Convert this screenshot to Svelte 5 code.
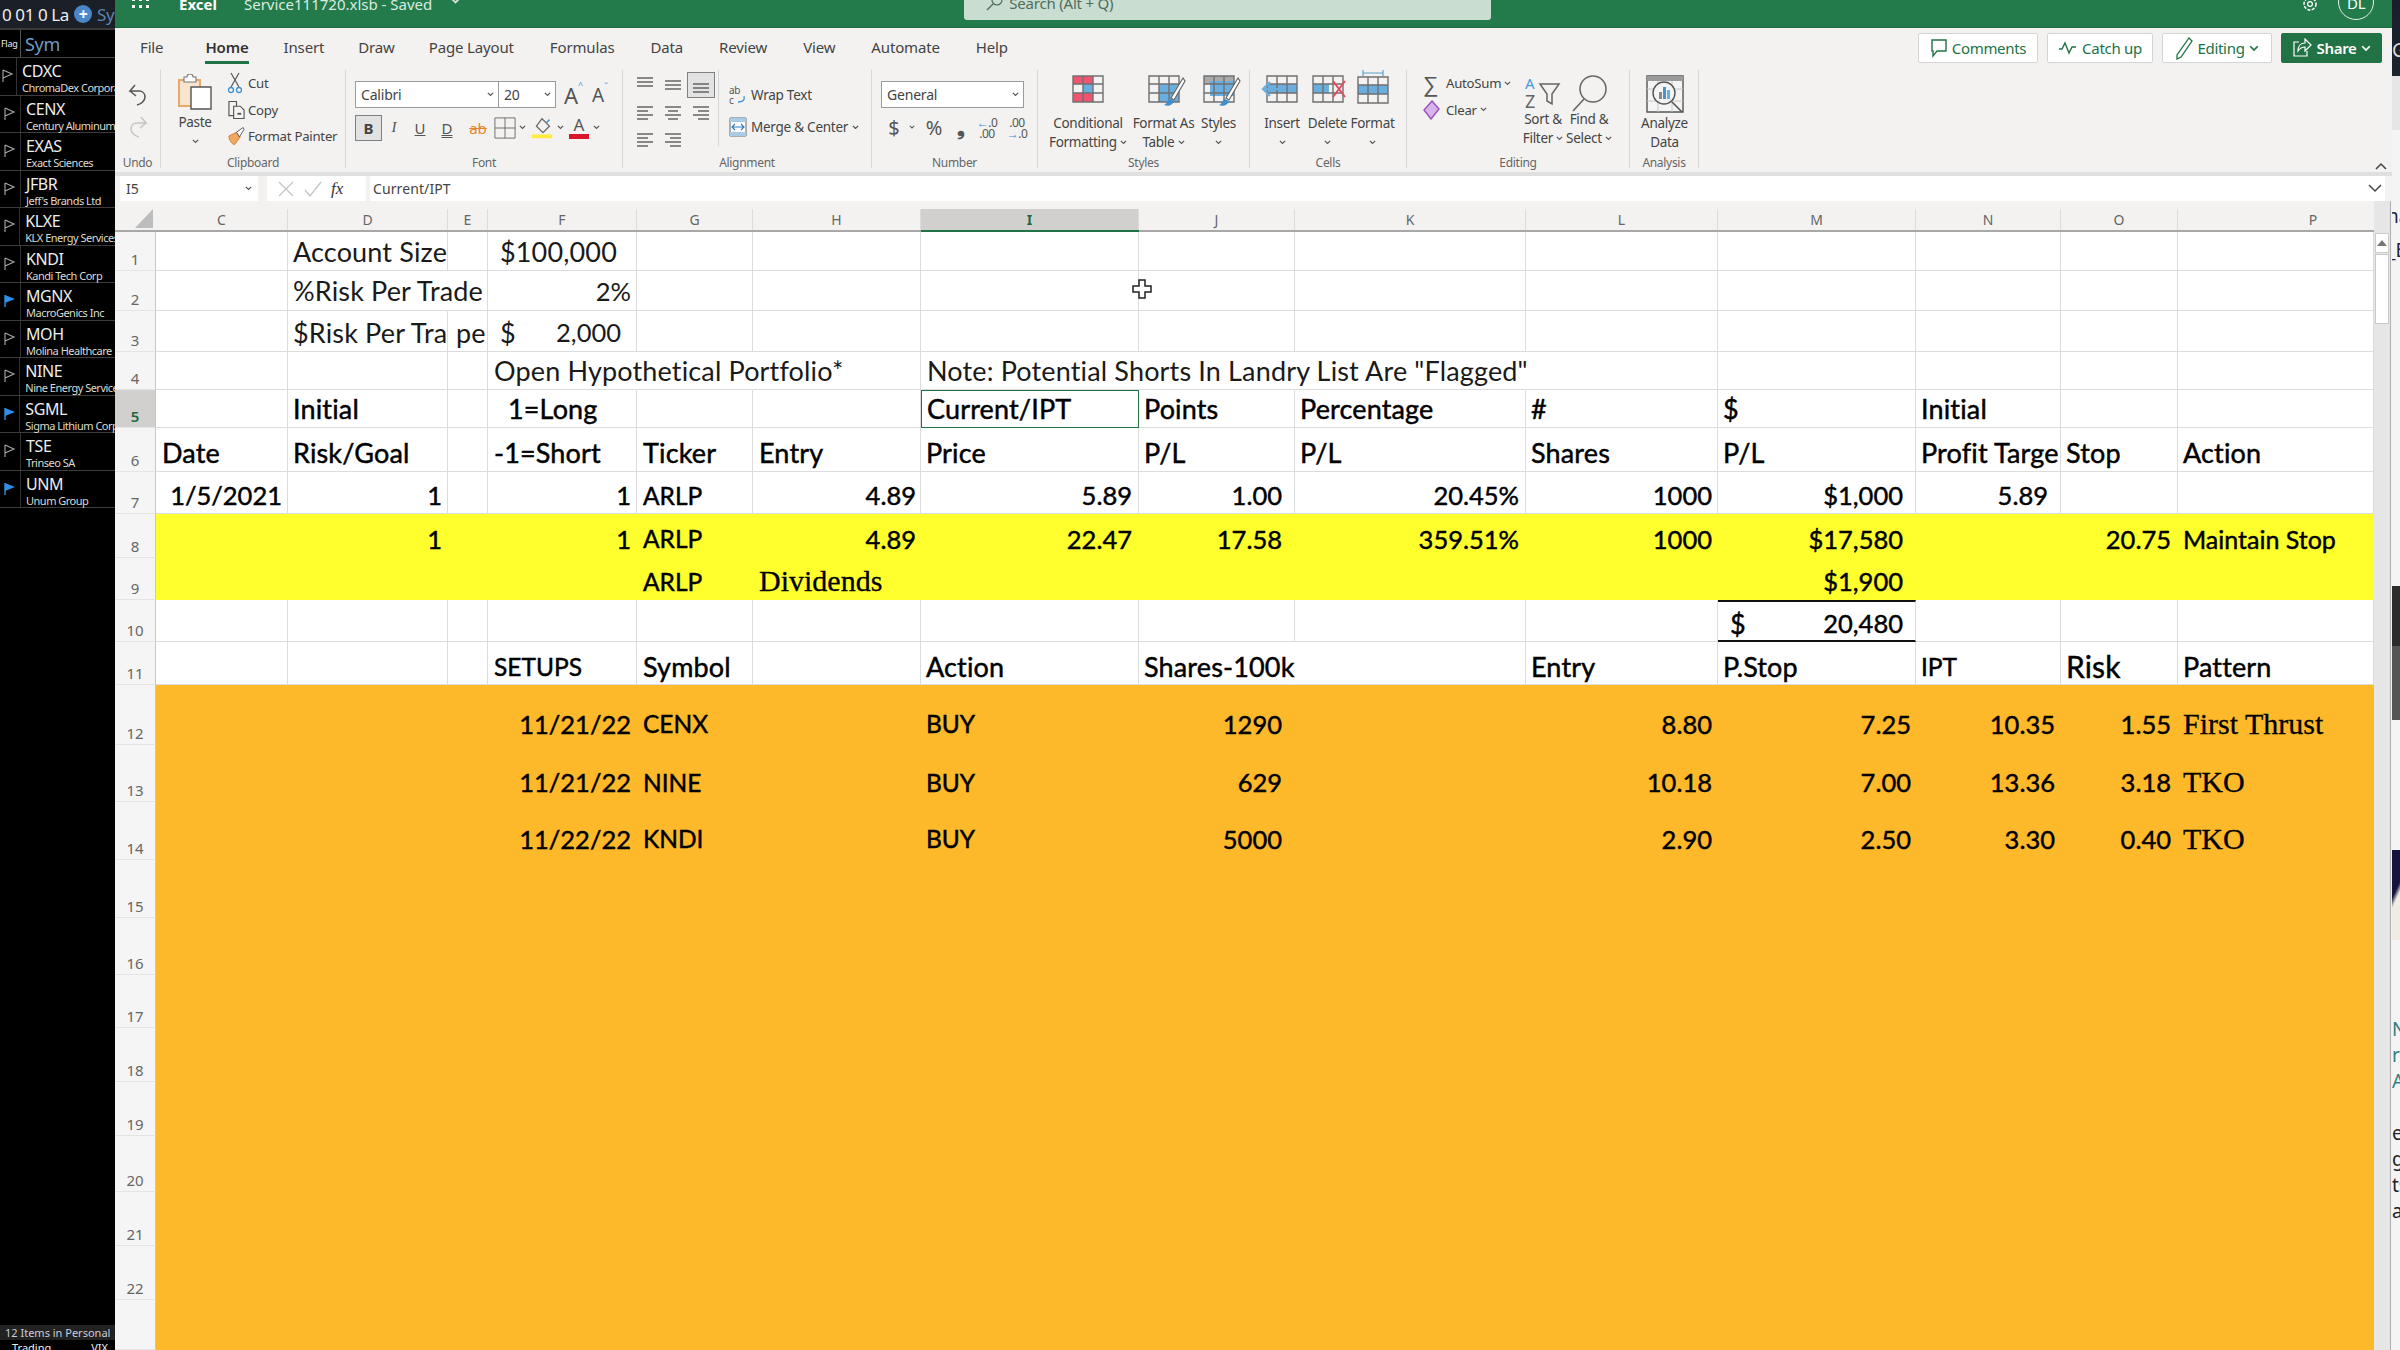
<script>
  const cols = ['C','D','E','F','G','H','I','J','K','L','M','N','O','P'];
  const heads = cols;

  const l = (t, pad = 6, extra = {}) => ({ t, pad, align: 'left', ...extra });
  const r = (t, pad = 5, extra = {}) => ({ t, pad, align: 'right', ...extra });

  const rows = [
    { n: 1, h: 39, lift: 0, tone: 'plain', cells: { D: l('Account Size', 5), F: l('$100,000', 12) } },
    { n: 2, h: 40, lift: 0, tone: 'plain', cells: { D: l('%Risk Per Trade', 5, { nb: 1 }), E: l(''), F: r('2%', 5) } },
    { n: 3, h: 41, lift: 2, tone: 'plain', cells: { D: l('$Risk Per Tra', 5, { clip: 1 }), E: l('pe', 8), F: l('$', 12, { t2: '2,000', pad2: 15 }) } },
    { n: 4, h: 38, lift: 0, tone: 'plain', cells: { F: l('Open Hypothetical Portfolio*', 6, { nb: 1 }), G: l('', 6, { nb: 1 }), I: l('Note: Potential Shorts In Landry List Are "Flagged"', 6, { nb: 1 }), J: l('', 6, { nb: 1 }), K: l('', 6, { nb: 1 }) } },
    { n: 5, h: 38, lift: 0, tone: 'bold', sel: 1, cells: { D: l('Initial', 5), F: l('1=Long', 20), I: l('Current/IPT', 6, { selected: 1 }), J: l('Points', 5), K: l('Percentage', 5), L: l('#', 5), M: l('$', 5), N: l('Initial', 5) } },
    { n: 6, h: 44, lift: 5, tone: 'bold', cells: { C: l('Date'), D: l('Risk/Goal', 5), F: l('-1=Short'), G: l('Ticker'), H: l('Entry'), I: l('Price', 5), J: l('P/L', 5), K: l('P/L', 5), L: l('Shares', 5), M: l('P/L', 5), N: l('Profit Targe', 5, { clip: 1 }), O: l('Stop', 5), P: l('Action', 5) } },
    { n: 7, h: 42, lift: 5, tone: 'bold', cells: { C: r('1/5/2021', 5), D: r('1', 5), F: r('1', 5), G: l('ARLP'), H: r('4.89', 4), I: r('5.89', 6), J: r('1.00', 12), K: r('20.45%', 6), L: r('1000', 5), M: r('$1,000', 12), N: r('5.89', 12) } },
    { n: 8, h: 44, lift: 6, tone: 'bold', fill: 'yellow', cells: { D: r('1', 5), F: r('1', 5), G: l('ARLP'), H: r('4.89', 4), I: r('22.47', 6), J: r('17.58', 12), K: r('359.51%', 6), L: r('1000', 5), M: r('$17,580', 12), O: r('20.75', 6), P: l('Maintain Stop', 5, { tight: 1 }) } },
    { n: 9, h: 42, lift: 5, tone: 'bold', fill: 'yellow', cells: { G: l('ARLP'), H: l('Dividends', 6, { serif: 1 }), M: r('$1,900', 12) } },
    { n: 10, h: 42, lift: 4, tone: 'bold', cells: { M: l('$', 12, { t2: '20,480', pad2: 12, total: 1 }) } },
    { n: 11, h: 43, lift: 6, tone: 'bold', cells: { F: l('SETUPS'), G: l('Symbol'), I: l('Action', 5), J: l('Shares-100k', 5, { nb: 1 }), L: l('Entry', 5), M: l('P.Stop', 5), N: l('IPT', 5), O: l('Risk', 5, { big: 1 }), P: l('Pattern', 5) } },
    { n: 12, h: 60, lift: 18, tone: 'bold', fill: 'orange', cells: { F: r('11/21/22', 5), G: l('CENX'), I: l('BUY', 5), J: r('1290', 12), L: r('8.80', 5), M: r('7.25', 4), N: r('10.35', 5), O: r('1.55', 6), P: l('First Thrust', 5, { serif: 1 }) } },
    { n: 13, h: 57, lift: 18, tone: 'bold', fill: 'orange', cells: { F: r('11/21/22', 5), G: l('NINE'), I: l('BUY', 5), J: r('629', 12), L: r('10.18', 5), M: r('7.00', 4), N: r('13.36', 5), O: r('3.18', 6), P: l('TKO', 5, { serif: 1 }) } },
    { n: 14, h: 58, lift: 16, tone: 'bold', fill: 'orange', cells: { F: r('11/22/22', 5), G: l('KNDI'), I: l('BUY', 5), J: r('5000', 12), L: r('2.90', 5), M: r('2.50', 4), N: r('3.30', 5), O: r('0.40', 6), P: l('TKO', 5, { serif: 1 }) } },
    ...[[15, 58], [16, 57], [17, 53], [18, 54], [19, 54], [20, 56], [21, 54], [22, 54], ['', 50]].map(([n, h]) => ({ n, h, lift: 0, tone: 'bold', fill: 'orange', cells: {} }))
  ];

  const tickers = [
    ['CDXC', 'ChromaDex Corporation', 0], ['CENX', 'Century Aluminum', 0], ['EXAS', 'Exact Sciences', 0],
    ['JFBR', "Jeff's Brands Ltd", 0], ['KLXE', 'KLX Energy Services', 0], ['KNDI', 'Kandi Tech Corp', 0],
    ['MGNX', 'MacroGenics Inc', 1], ['MOH', 'Molina Healthcare', 0], ['NINE', 'Nine Energy Service', 0],
    ['SGML', 'Sigma Lithium Corp', 1], ['TSE', 'Trinseo SA', 0], ['UNM', 'Unum Group', 1]
  ];

  const tabs = ['File', 'Home', 'Insert', 'Draw', 'Page Layout', 'Formulas', 'Data', 'Review', 'View', 'Automate', 'Help'];
  const isCaps = (t) => /^[A-Z]+$/.test(t ?? '');
</script>

{#snippet chev(w = 8, c = '#555')}
  <svg class="chev" width={w} height={w * 0.7} viewBox="0 0 8 5.6"><path d="M1 1l3 3 3-3" fill="none" stroke={c} stroke-width="1.4"/></svg>
{/snippet}

{#snippet cmd(width, icon, lines, arrow, top = 44)}
  <div class="cmd" style="width:{width}px">
    <div class="cmd-icon" style="height:{top}px">{@render icon()}</div>
    {#each lines as line, i}
      <div class="cmd-line">{line}{#if arrow === 'inline' && i === lines.length - 1}&nbsp;{@render chev(7)}{/if}</div>
    {/each}
    {#if arrow === 'below'}<div class="cmd-line">{@render chev(7)}</div>{/if}
  </div>
{/snippet}

{#snippet gridIcon(body)}
  <svg width="36" height="28" viewBox="0 0 36 28">
    {@render body()}
    <path d="M3 1h30v26H3zM3 9h30M3 18h30M13 1v26M23 1v26" fill="none" stroke="#707070" stroke-width="1.4"/>
  </svg>
{/snippet}

{#snippet condIcon()}
  {#snippet b()}<path d="M3 1h20v8H3zM3 18h20v9H3z" fill="#f0546f"/><path d="M13 9h10v9H13z" fill="#6aaee0"/>{/snippet}
  {@render gridIcon(b)}
{/snippet}
{#snippet tableIcon()}
  {#snippet b()}<path d="M13 9h20v18H13z" fill="#6aaee0"/>{/snippet}
  <div class="brushed">{@render gridIcon(b)}<svg class="brush" width="24" height="32" viewBox="0 0 24 32"><path d="M21 1L9 21l3 2L23 4z" fill="#fff" stroke="#666" stroke-width="1.2"/><path d="M8 22c-3 1-2 4-6 6 4 2 9 0 10-4z" fill="#3f8fd0"/></svg></div>
{/snippet}
{#snippet stylesIcon()}
  {#snippet b()}<path d="M3 1h30v8H3z" fill="#aaa"/><path d="M9 6h24v15H9z" fill="#6aaee0"/>{/snippet}
  <div class="brushed">{@render gridIcon(b)}<svg class="brush" width="24" height="32" viewBox="0 0 24 32"><path d="M21 1L9 21l3 2L23 4z" fill="#fff" stroke="#666" stroke-width="1.2"/><path d="M8 22c-3 1-2 4-6 6 4 2 9 0 10-4z" fill="#3f8fd0"/></svg></div>
{/snippet}
{#snippet insertIcon()}
  {#snippet b()}<path d="M3 9h30v9H3z" fill="#6aaee0"/>{/snippet}
  <div class="brushed">{@render gridIcon(b)}<svg class="brush2" width="26" height="18" viewBox="0 0 26 18"><path d="M25 9H3M10 2L3 9l7 7" fill="none" stroke="#6aaee0" stroke-width="2.2"/></svg></div>
{/snippet}
{#snippet deleteIcon()}
  {#snippet b()}<path d="M3 9h16v9H3z" fill="#6aaee0"/>{/snippet}
  <div class="brushed">{@render gridIcon(b)}<svg class="brush3" width="16" height="20" viewBox="0 0 16 20"><path d="M2 2l12 16M14 2L2 18" fill="none" stroke="#e8485f" stroke-width="2"/></svg></div>
{/snippet}
{#snippet formatIcon()}
  {#snippet b()}<path d="M3 9h30v9H3z" fill="#6aaee0"/><path d="M8 -1h20" stroke="#6aaee0"/>{/snippet}
  <div class="fmt-wrap"><svg class="fmt-top" width="24" height="6" viewBox="0 0 24 6"><path d="M2 0v6M22 0v6M2 3h20" stroke="#5a9fd4" stroke-width="1.2"/></svg>{@render gridIcon(b)}</div>
{/snippet}
{#snippet sortIcon()}
  <svg width="38" height="36" viewBox="0 0 38 36"><text x="1" y="14" font-family="Noto Sans" font-size="15" fill="#4a9bd8">A</text><text x="1" y="33" font-family="Noto Sans" font-size="18" fill="#666">Z</text><path d="M16 9h19l-7 10v10l-5-3v-7z" fill="none" stroke="#666" stroke-width="1.5"/></svg>
{/snippet}
{#snippet findIcon()}
  <svg width="38" height="38" viewBox="0 0 38 38"><circle cx="23" cy="14" r="13" fill="none" stroke="#666" stroke-width="1.5"/><path d="M14 24L3 36" stroke="#666" stroke-width="1.6"/></svg>
{/snippet}
{#snippet analyzeIcon()}
  <svg width="38" height="38" viewBox="0 0 38 38"><path d="M1 1h36v36H1z" fill="#f4f4f4" stroke="#555" stroke-width="1.4"/><path d="M1 1h36v5H1z" fill="#9a9a9a"/><path d="M1 14h36M1 26h36M12 6v31M26 6v31" stroke="#c8c8c8"/><circle cx="18" cy="18" r="11" fill="#f4f4f4" stroke="#555" stroke-width="1.4"/><path d="M13 17h3v7h-3z" fill="#888"/><path d="M17 12h3v12h-3z" fill="#4a90d0"/><path d="M21 15h3v9h-3z" fill="#6aaee0"/><path d="M26 27l10 10" stroke="#555" stroke-width="1.6"/></svg>
{/snippet}

<div class="app">
  <aside class="side">
    <div class="side-top"><span>0 01 0 La</span><i class="plus">+</i><span class="sy">Sym</span></div>
    <div class="side-head"><span class="flag-h">Flag</span><span class="sym-h">Sym</span></div>
    {#each tickers as [sym, name, on]}
      <div class="tick">
        <span class="flag-c">
          <svg width="12" height="14" viewBox="0 0 12 14">
            {#if on}<path d="M1 1l10 4-10 4z" fill="#2f8fe8"/><path d="M1 1v12" stroke="#2f8fe8" stroke-width="1.4"/>
            {:else}<path d="M1 1l9 4-9 4M1 1v12" fill="none" stroke="#aaa" stroke-width="1.1"/>{/if}
          </svg>
        </span>
        <div class="tick-t"><b>{sym}</b><small>{name}</small></div>
      </div>
    {/each}
    <div class="side-fill"></div>
    <div class="side-foot">12 Items in Personal</div>
    <div class="side-tabs"><span>Trading</span><span>VIX</span></div>
  </aside>

  <main class="main">
    <header class="topbar">
      <svg class="waffle" width="18" height="18" viewBox="0 0 18 18" fill="#fff">
        {#each [1, 8, 15] as y}{#each [1, 8, 15] as x}<rect x={x - 1} y={y - 1} width="3" height="3"/>{/each}{/each}
      </svg>
      <span class="excel">Excel</span>
      <span class="doc">Service111720.xlsb - Saved</span>
      <span class="doc-chev">{@render chev(11, '#cfe3d6')}</span>
      <div class="search">
        <svg width="18" height="18" viewBox="0 0 18 18"><circle cx="11" cy="6" r="5" fill="none" stroke="#4b6b58" stroke-width="1.2"/><path d="M7 10l-6 6" stroke="#4b6b58" stroke-width="1.2"/></svg>
        <span>Search (Alt + Q)</span>
      </div>
      <svg class="gear" width="18" height="18" viewBox="0 0 18 18"><circle cx="9" cy="9" r="6" fill="none" stroke="#fff" stroke-width="1.5" stroke-dasharray="3 1.4"/><circle cx="9" cy="9" r="2.4" fill="none" stroke="#fff" stroke-width="1.2"/></svg>
      <div class="avatar">DL</div>
    </header>

    <nav class="tabs">
      {#each tabs as tab}
        <span class="tab" class:active={tab === 'Home'}>{tab}</span>
      {/each}
      <div class="actions">
        <button class="act" style="width:120px">
          <svg width="18" height="20" viewBox="0 0 18 20"><path d="M2 2h14v11H7l-4 5v-5H2z" fill="none" stroke="#217346" stroke-width="1.4"/></svg>Comments
        </button>
        <button class="act" style="width:106px">
          <svg width="20" height="14" viewBox="0 0 20 14"><path d="M1 8h3l3-6 4 10 3-6h4" fill="none" stroke="#217346" stroke-width="1.4"/></svg>Catch up
        </button>
        <button class="act" style="width:110px">
          <svg width="18" height="24" viewBox="0 0 18 24"><path d="M14 2l3 3L6 21l-4 2 0-4z" fill="none" stroke="#217346" stroke-width="1.3"/></svg>Editing {@render chev(10, '#217346')}
        </button>
        <button class="act share" style="width:101px">
          <svg width="20" height="20" viewBox="0 0 20 20"><path d="M7 4H2v14h13v-5M6 13c0-5 3-8 7-8V1l6 6-6 6V9c-3 0-5 1-7 4z" fill="none" stroke="#fff" stroke-width="1.2"/></svg>Share {@render chev(10, '#fff')}
        </button>
      </div>
    </nav>

    <section class="ribbon">
      <div class="grp" style="width:46px">
        <div class="body col-center">
          <svg class="undo" width="22" height="22" viewBox="0 0 22 22"><path d="M8 1L3 7h9c4 0 6 3 6 6s-3 7-8 8M3 7l6 5" fill="none" stroke="#555" stroke-width="1.5"/></svg>
          <svg class="redo" width="22" height="22" viewBox="0 0 22 22"><path d="M14 1l5 6h-9c-4 0-6 3-6 6s3 7 8 8M19 7l-6 5" fill="none" stroke="#c4c4c4" stroke-width="1.5"/></svg>
        </div>
        <div class="glabel">Undo</div>
      </div>

      <div class="grp" style="width:185px">
        <div class="body row" style="padding-left:16px">
          <div class="paste">
            <svg width="36" height="36" viewBox="0 0 36 36"><path d="M2 6h21v26H2z" fill="#f8e4cf" stroke="#e8a868" stroke-width="2"/><path d="M7 3h3a3 3 0 016 0h3v5H7z" fill="#fff" stroke="#777" stroke-width="1.1"/><path d="M14 13h20v22H14z" fill="#fff" stroke="#555" stroke-width="1.4"/></svg>
            <div class="cmd-line pl">Paste</div>
            <div class="cmd-line">{@render chev(7)}</div>
          </div>
          <div class="rows">
            <div class="small-row"><span class="ic">
              <svg width="14" height="22" viewBox="0 0 14 22"><path d="M3 1l8 14M11 1L3 15" stroke="#555" stroke-width="1.2" fill="none"/><circle cx="3" cy="18" r="2.5" fill="none" stroke="#3f8fd0" stroke-width="1.3"/><circle cx="11" cy="18" r="2.5" fill="none" stroke="#3f8fd0" stroke-width="1.3"/></svg>
            </span>Cut</div>
            <div class="small-row"><span class="ic">
              <svg width="18" height="20" viewBox="0 0 18 20"><path d="M1 1h8v15H1z" fill="none" stroke="#555" stroke-width="1.2"/><path d="M6 6h7l4 4v9H6z" fill="#f4f4f4" stroke="#555" stroke-width="1.2"/><path d="M10 14h4" stroke="#555" stroke-width="2"/></svg>
            </span>Copy</div>
            <div class="small-row"><span class="ic">
              <svg width="18" height="20" viewBox="0 0 18 20"><path d="M1 10l8-4 4 5-6 8c-3 0-6-5-6-9z" fill="#f0a860" stroke="#d87b2d"/><path d="M9 6l7-5 1 2-5 8z" fill="#fff" stroke="#555"/></svg>
            </span>Format Painter</div>
          </div>
        </div>
        <div class="glabel">Clipboard</div>
      </div>

      <div class="grp" style="width:277px">
        <div class="body fields" style="padding-left:9px">
          <div class="f-row">
            <div class="box" style="width:144px">Calibri{@render chev(7)}</div>
            <div class="box joined" style="width:58px">20{@render chev(7)}</div>
            <span class="aa big">A<sup>^</sup></span><span class="aa">A<sup class="dn">ˇ</sup></span>
          </div>
          <div class="f-row">
            <span class="bold-btn">B</span>
            <span class="fi it">I</span>
            <span class="fi un">U</span>
            <span class="fi dun">D</span>
            <span class="fi st">ab</span>
            <span class="fi bd"><svg width="22" height="22" viewBox="0 0 24 24"><path d="M1 1h22v22H1zM12 1v22M1 12h22" fill="none" stroke="#666"/></svg></span>
            {@render chev(7)}
            <span class="fi bd2"><svg width="26" height="24" viewBox="0 0 28 24"><path d="M14 2l8 8-7 7-7-7z" fill="none" stroke="#666" stroke-width="1.4"/><path d="M19 6l3-3" stroke="#3f8fd0" stroke-width="1.6"/><path d="M3 19h22v4H3z" fill="#ffeb3b"/></svg></span>
            {@render chev(7)}
            <span class="fi bd2 fc"><span class="fa">A</span><i></i></span>
            {@render chev(7)}
          </div>
        </div>
        <div class="glabel">Font</div>
      </div>

      <div class="grp" style="width:249px">
        <div class="body row">
          <div class="aligns">
            {#each ['t','m','b','l','c','r','il','ir'] as a}
              <span class="al" class:on={a === 'b'}>
                <svg width="18" height="16" viewBox="0 0 18 16"><path d={a === 'l' || a === 'il' ? 'M1 2h16M1 6h11M1 10h16M1 14h11' : a === 'r' || a === 'ir' ? 'M1 2h16M6 6h11M1 10h16M6 14h11' : a === 'c' ? 'M1 2h16M4 6h10M1 10h16M4 14h10' : a === 't' ? 'M1 1h16M1 5h16M1 9h16' : a === 'm' ? 'M1 4h16M1 8h16M1 12h16' : 'M1 7h16M1 11h16M1 15h16'} stroke="#666" stroke-width="1.3" fill="none"/></svg>
              </span>
            {/each}
          </div>
          <div class="wrapcol">
            <div class="wrapline">
              <svg width="18" height="20" viewBox="0 0 18 20"><text x="0" y="9" font-family="Noto Sans" font-size="10" fill="#555">ab</text><text x="0" y="19" font-family="Noto Sans" font-size="10" fill="#555">c</text><path d="M9 17c5 0 7-2 6-6" fill="none" stroke="#3f8fd0" stroke-width="1.3"/></svg>
              Wrap Text
            </div>
            <div class="wrapline">
              <svg width="18" height="22" viewBox="0 0 18 22"><path d="M1 2h16v18H1z" fill="#fff" stroke="#666"/><path d="M1 2h16v4H1zM1 16h16v4H1z" fill="#a8cbe6"/><path d="M3 11h12M6 8l-3 3 3 3M12 8l3 3-3 3" fill="none" stroke="#2f7fc4" stroke-width="1.2"/></svg>
              Merge &amp; Center {@render chev(7)}
            </div>
          </div>
        </div>
        <div class="glabel">Alignment</div>
      </div>

      <div class="grp" style="width:166px">
        <div class="body fields" style="padding-left:9px">
          <div class="f-row"><div class="box" style="width:143px">General{@render chev(7)}</div></div>
          <div class="f-row num">
            <span style="width:26px" class="n1">$</span><span style="width:10px">{@render chev(6)}</span>
            <span style="width:34px" class="n1">%</span><span style="width:20px" class="n1 cm">❟</span>
            <span style="width:32px" class="n2"><i><em>←</em>.0</i><i>.00</i></span>
            <span style="width:28px" class="n2"><i>.00</i><i><em>→</em>.0</i></span>
          </div>
        </div>
        <div class="glabel">Number</div>
      </div>

      <div class="grp" style="width:212px">
        <div class="body row" style="padding-left:8px">
          {@render cmd(84, condIcon, ['Conditional', 'Formatting'], 'inline')}
          {@render cmd(67, tableIcon, ['Format As', 'Table'], 'inline')}
          {@render cmd(43, stylesIcon, ['Styles'], 'below')}
        </div>
        <div class="glabel">Styles</div>
      </div>

      <div class="grp" style="width:157px">
        <div class="body row" style="padding-left:9px">
          {@render cmd(46, insertIcon, ['Insert'], 'below')}
          {@render cmd(45, deleteIcon, ['Delete'], 'below')}
          {@render cmd(45, formatIcon, ['Format'], 'below')}
        </div>
        <div class="glabel">Cells</div>
      </div>

      <div class="grp" style="width:223px">
        <div class="body row" style="padding-left:16px">
          <div class="rows edit">
            <div class="small-row"><span class="sigma">∑</span>AutoSum {@render chev(7)}</div>
            <div class="small-row"><span class="ic2"><svg width="17" height="20" viewBox="0 0 17 20"><path d="M9 1l7 8-8 10-7-9z" fill="#d9b4e8" stroke="#9b4fc0" stroke-width="1.4"/></svg></span>Clear {@render chev(7)}</div>
          </div>
          {@render cmd(46, sortIcon, ['Sort &', 'Filter'], 'inline', 40)}
          {@render cmd(46, findIcon, ['Find &', 'Select'], 'inline', 40)}
        </div>
        <div class="glabel">Editing</div>
      </div>

      <div class="grp" style="width:69px">
        <div class="body row" style="padding-left:6px">
          {@render cmd(57, analyzeIcon, ['Analyze', 'Data'], '', 44)}
        </div>
        <div class="glabel">Analysis</div>
      </div>

      <div class="collapse"><svg width="12" height="8" viewBox="0 0 12 8"><path d="M1 7l5-5 5 5" fill="none" stroke="#444" stroke-width="1.5"/></svg></div>
    </section>

    <section class="fbar">
      <div class="namebox">I5 {@render chev(7)}</div>
      <div class="fxbox">
        <svg width="18" height="18" viewBox="0 0 18 18"><path d="M2 2l14 14M16 2L2 16" stroke="#c4c4c4" stroke-width="1.3"/></svg>
        <svg width="20" height="18" viewBox="0 0 20 18"><path d="M2 10l5 6L18 2" fill="none" stroke="#c4c4c4" stroke-width="1.3"/></svg>
        <span class="fx">fx</span>
      </div>
      <div class="finput"><span>Current/IPT</span><svg width="14" height="9" viewBox="0 0 14 9"><path d="M1 1l6 6 6-6" fill="none" stroke="#444" stroke-width="1.5"/></svg></div>
    </section>

    <section class="sheet">
      <div class="table">
        <div class="colhead">
          <div class="corner"><svg width="18" height="19" viewBox="0 0 18 19"><path d="M18 0v19H0z" fill="#bdbdbd"/></svg></div>
          {#each heads as c}<div class="colcell col-{c}" class:cur={c === 'I'}>{c}</div>{/each}
        </div>
        {#each rows as row}
          <div class="row-line {row.fill ?? ''} {row.tone}" style="height:{row.h}px">
            <div class="rowhead" class:cur={row.sel}>{row.n}</div>
            {#each cols as c}
              {@const cell = row.cells[c]}
              <div
                class="cell col-{c}"
                class:nb={cell?.nb}
                class:clip={cell?.clip}
                class:selected={cell?.selected}
                class:total={cell?.total}
                class:right={cell?.align === 'right'}
                class:serif={cell?.serif}
                class:bigger={cell?.big}
                class:tight={cell?.tight}
                class:caps={isCaps(cell?.t)}
                style="padding-top:{row.lift}px;padding-left:{cell?.align === 'left' ? cell.pad : 0}px;padding-right:{cell?.align === 'right' ? cell.pad : cell?.pad2 ?? 0}px"
              >
                {#if cell}
                  <span>{cell.t}</span>{#if cell.t2}<span class="num2">{cell.t2}</span>{/if}
                {/if}
              </div>
            {/each}
          </div>
        {/each}
      </div>
      <div class="scroll">
        <div class="sb-btn"><svg width="10" height="6" viewBox="0 0 10 6"><path d="M5 0l5 6H0z" fill="#777"/></svg></div>
        <div class="sb-thumb"></div>
      </div>
    </section>
  </main>

  <div class="stub">
    <div class="s1">G</div><div class="s2"></div><div class="s3"><span>na</span><span>_E</span></div><div class="s4"></div>
    <div class="s5"></div><div class="s6"></div><div class="s7"></div>
    <div class="s8"><span class="tl">N</span><span class="tl">r</span><span class="tl">A</span><span class="st">★</span><span>e</span><span>g</span><span>ts</span><span>al</span></div>
  </div>

  <svg class="cursor" width="22" height="22" viewBox="0 0 22 22"><path d="M8 2h6v6h6v6h-6v6H8v-6H2V8h6z" fill="#fff" stroke="#222" stroke-width="1.5"/></svg>
</div>

<style>
  :global(body) { margin: 0; background: #000; }
  .app { position: relative; display: flex; width: 2400px; height: 1350px; overflow: hidden; font-family: "Noto Sans", sans-serif; color: #444; }

  .side { width: 115px; flex: none; background: #000; display: flex; flex-direction: column; overflow: hidden; color: #eee; }
  .side-top { height: 28px; flex: none; background: #1b1f27; display: flex; align-items: center; gap: 5px; padding-left: 2px; font-size: 17px; white-space: nowrap; letter-spacing: -0.4px; border-bottom: 2px solid #3a3a3a; }
  .plus { width: 18px; height: 18px; border-radius: 50%; background: #4a86c8; color: #fff; font-style: normal; font-weight: bold; font-size: 16px; line-height: 18px; text-align: center; flex: none; margin-left: 0; }
  .sy { color: #5b86b0; }
  .side-head { height: 27px; flex: none; display: flex; align-items: center; border-bottom: 1px solid #444; }
  .flag-h { width: 21px; font-size: 9px; border-right: 1px solid #555; height: 100%; display: flex; align-items: center; padding-left: 1px; box-sizing: border-box; letter-spacing: -0.3px; }
  .sym-h { padding-left: 4px; color: #6f9cc4; font-size: 18px; letter-spacing: -0.3px; }
  .tick { height: 37.5px; box-sizing: border-box; display: flex; border-bottom: 1px solid #3c3c3c; flex: none; }
  .flag-c { width: 21px; border-right: 1px solid #333; display: flex; align-items: center; justify-content: center; box-sizing: border-box; }
  .tick-t { display: flex; flex-direction: column; padding-left: 5px; min-width: 0; white-space: nowrap; }
  .tick-t b { font-weight: 400; font-size: 16px; line-height: 20px; letter-spacing: -0.4px; margin-top: 3px; }
  .tick-t small { font-size: 11px; line-height: 13px; color: #dcdcd0; letter-spacing: -0.5px; }
  .side-fill { flex: 1; }
  .side-foot { height: 15px; flex: none; background: #222; font-size: 11px; line-height: 15px; padding-left: 5px; color: #ccd; white-space: nowrap; }
  .side-tabs { height: 10px; flex: none; display: flex; gap: 40px; padding-left: 12px; font-size: 11px; line-height: 15px; overflow: hidden; }

  .main { width: 2277px; flex: none; display: flex; flex-direction: column; background: #f3f2f1; }
  .topbar { height: 28px; flex: none; background: #237a4a; display: flex; align-items: flex-start; color: #fff; overflow: hidden; border-bottom: 1px solid #1d6a3f; box-sizing: border-box; }
  .waffle { margin: -9px 0 0 17px; flex: none; }
  .excel { margin: -7px 0 0 29px; font-weight: 700; font-size: 15px; line-height: 22px; }
  .doc { margin: -7px 0 0 27px; font-size: 15px; line-height: 22px; color: #dcebe2; }
  .doc-chev { margin: -3px 0 0 18px; display: block; line-height: 0; }
  .search { margin-left: 503px; width: 527px; height: 20px; flex: none; background: #c9ddd1; border-radius: 0 0 3px 3px; display: flex; align-items: flex-start; gap: 5px; padding-left: 22px; box-sizing: border-box; color: #4f6e5c; font-size: 15px; line-height: 18px; }
  .search svg { margin-top: -6px; }
  .search span { margin-top: -6px; letter-spacing: -0.2px; }
  .gear { margin: -5px 0 0 810px; flex: none; }
  .avatar { margin: -16px 0 0 19px; width: 36px; height: 36px; border: 1.5px solid #e6f0ea; border-radius: 50%; box-sizing: border-box; display: flex; align-items: flex-end; justify-content: center; padding-bottom: 6px; font-size: 15px; flex: none; }

  .tabs { height: 40px; flex: none; display: flex; align-items: center; padding-left: 25px; gap: 36px; font-size: 15px; color: #444; }
  .tab { position: relative; letter-spacing: -0.15px; height: 32px; line-height: 30px; white-space: nowrap; box-sizing: border-box; }
  .tab.active { font-weight: 600; color: #333; border-bottom: 3px solid #217346; margin: 0 -1px 0 6px; }
  .tab:nth-child(3) { margin-right: -2px; }
  .tab:nth-child(4) { margin-right: -2px; }
  .actions { margin-left: auto; display: flex; gap: 9px; padding-right: 10px; }
  .act { height: 30px; flex: none; background: #fff; border: 1px solid #d4d4d4; border-radius: 2px; display: flex; align-items: center; justify-content: center; gap: 4px; color: #217346; font-family: inherit; font-size: 15px; padding: 0; letter-spacing: -0.3px; }
  .share { background: #217346; border-color: #217346; color: #fff; font-weight: 600; }

  .ribbon { height: 108px; flex: none; display: flex; padding-top: 2px; box-sizing: border-box; border-bottom: 4px solid #e0e0e0; position: relative; }
  .grp { flex: none; height: 98px; box-sizing: border-box; border-right: 1px solid #d6d6d6; display: flex; flex-direction: column; position: relative; }
  .body { height: 85px; flex: none; }
  .glabel { font-size: 12px; line-height: 14px; text-align: center; color: #666; margin-top: 1px; letter-spacing: -0.3px; white-space: nowrap; }
  .row { display: flex; }
  .col-center { display: flex; flex-direction: column; align-items: center; padding-top: 14px; gap: 10px; box-sizing: border-box; }
  .paste { width: 36px; padding-top: 4px; display: flex; flex-direction: column; align-items: center; flex: none; }
  .pl { margin-top: 3px; }
  .rows { margin-left: 15px; display: flex; flex-direction: column; }
  .small-row { height: 26.5px; display: flex; align-items: center; font-size: 13.2px; white-space: nowrap; letter-spacing: -0.25px; gap: 3px; }
  .ic { width: 17px; display: flex; justify-content: flex-start; flex: none; }
  .edit { margin-left: 0; width: 97px; flex: none; }
  .sigma { font-size: 22px; width: 20px; line-height: 22px; color: #555; }
  .ic2 { width: 20px; display: flex; flex: none; }
  .fields { padding-top: 11px; box-sizing: border-box; display: flex; flex-direction: column; gap: 6px; }
  .f-row { height: 27px; display: flex; align-items: center; }
  .box { height: 27px; box-sizing: border-box; background: #fff; border: 1.5px solid #9b9b9b; display: flex; align-items: center; justify-content: space-between; padding: 0 4px 0 5px; font-size: 14px; letter-spacing: -0.2px; flex: none; }
  .joined { margin-left: -1px; }
  .aa { font-size: 19px; color: #555; margin-left: 10px; display: inline-flex; width: 18px; }
  .aa.big { font-size: 22px; margin-left: 8px; }
  .aa sup { font-size: 9px; color: #3f8fd0; line-height: 1; }
  .bold-btn { width: 27px; height: 26px; box-sizing: border-box; background: #e2e2e2; border: 1.5px solid #808080; display: flex; align-items: center; justify-content: center; font-weight: 700; font-size: 15px; flex: none; }
  .fi { display: inline-flex; justify-content: center; font-size: 15px; color: #555; flex: none; }
  .it { font-style: italic; font-family: "Liberation Serif", serif; width: 14px; margin-left: 5px; }
  .un { text-decoration: underline; width: 18px; margin-left: 10px; }
  .dun { text-decoration: underline double; width: 18px; margin-left: 9px; }
  .st { text-decoration: line-through; width: 20px; margin-left: 12px; }
  .bd { margin: 0 3px 0 6px; }
  .bd2 { margin: 0 2px 0 3px; }
  .fc { width: 24px; flex-direction: column; align-items: center; line-height: 18px; margin-left: 3px; }
  .fa { font-size: 17px; }
  .fc i { width: 20px; height: 5px; background: #d9142b; display: block; }
  .aligns { width: 84px; margin-left: 8px; padding-top: 2px; display: grid; grid-template-columns: repeat(3, 28px); grid-template-rows: 26px 30px 24px; align-items: center; justify-items: center; flex: none; }
  .al { width: 28px; height: 26px; display: flex; align-items: center; justify-content: center; box-sizing: border-box; }
  .al.on { background: #e2e2e2; border: 1.5px solid #808080; }
  .wrapcol { margin-left: 3px; padding: 4px 0 0 10px; height: 76px; border-left: 1px solid #d6d6d6; display: flex; flex-direction: column; gap: 6px; box-sizing: border-box; }
  .wrapline { height: 26px; margin-top: 0; display: flex; align-items: center; gap: 4px; font-size: 13.5px; white-space: nowrap; letter-spacing: -0.25px; }
  .wrapline:first-child { margin-top: 8px; }
  .num span { display: flex; justify-content: center; align-items: center; flex: none; color: #555; }
  .n1 { font-size: 20px; }
  .cm { font-weight: 700; }
  .n2 { font-size: 12px; line-height: 11px; text-align: center; flex-direction: column; letter-spacing: -0.5px; }
  .n2 i { font-style: normal; display: block; }
  .n2 em { color: #3f8fd0; font-style: normal; }

  .cmd { flex: none; display: flex; flex-direction: column; align-items: center; }
  .cmd-icon { display: flex; align-items: flex-start; justify-content: center; padding-top: 5px; box-sizing: border-box; flex: none; }
  .cmd-line { height: 19px; line-height: 19px; font-size: 13.5px; white-space: nowrap; letter-spacing: -0.3px; display: flex; align-items: center; justify-content: center; }
  .brushed { position: relative; width: 36px; height: 28px; }
  .brush { position: absolute; right: -4px; top: 2px; }
  .brush2 { position: absolute; left: -4px; top: 5px; }
  .brush3 { position: absolute; right: -1px; top: 4px; }
  .fmt-wrap { display: flex; flex-direction: column; align-items: center; margin-top: -5px; }
  .collapse { position: absolute; right: 5px; bottom: 2px; line-height: 0; }

  .fbar { height: 25px; flex: none; display: flex; padding: 0 7px 0 5px; gap: 9px; background: #f3f2f1; font-size: 14px; box-sizing: content-box; }
  .namebox { width: 138px; flex: none; background: #fff; display: flex; align-items: center; justify-content: space-between; padding: 0 6px; box-sizing: border-box; }
  .fxbox { width: 99px; flex: none; background: #fff; display: flex; align-items: center; gap: 8px; padding-left: 10px; box-sizing: border-box; }
  .fx { font-family: "Liberation Serif", serif; font-style: italic; font-size: 17px; color: #333; }
  .finput { flex: 1; margin-left: -5px; background: #fff; display: flex; align-items: center; justify-content: space-between; padding: 0 3px 0 3px; letter-spacing: 0.1px; }

  .sheet { flex: 1; min-height: 0; display: flex; overflow: hidden; background: #f3f2f1; }
  .table { width: 2259px; flex: none; display: flex; flex-direction: column; }
  .colhead { height: 31px; flex: none; display: flex; border-bottom: 2px solid #a8a8a8; box-sizing: border-box; align-items: flex-end; }
  .corner { width: 41px; height: 21px; flex: none; display: flex; justify-content: flex-end; padding-right: 3px; box-sizing: border-box; }
  .colcell { height: 21px; box-sizing: border-box; border-right: 1px solid #dcdcdc; text-align: center; font-size: 14px; line-height: 21px; color: #666; flex: none; }
  .colcell.cur { background: #d2d0ce; color: #1d6a3f; font-weight: 700; box-shadow: 0 2px 0 #217346; }
  .colcell.col-P { padding-left: 74px; border-right: none; }

  .col-C { width: 132px; } .col-D { width: 160px; } .col-E { width: 40px; } .col-F { width: 149px; }
  .col-G { width: 116px; } .col-H { width: 168px; } .col-I { width: 218px; } .col-J { width: 156px; }
  .col-K { width: 231px; } .col-L { width: 192px; } .col-M { width: 198px; } .col-N { width: 145px; }
  .col-O { width: 117px; } .col-P { width: 196px; }

  .row-line { display: flex; flex: none; box-sizing: border-box; }
  .rowhead { width: 41px; flex: none; box-sizing: border-box; background: #f5f5f5; border-right: 1px solid #c6c6c6; border-bottom: 1.5px solid #e4e4e4; display: flex; align-items: flex-end; justify-content: center; font-size: 15px; line-height: 20px; color: #666; padding-bottom: 1px; }
  .rowhead.cur { background: #d2d0ce; color: #1d6a3f; font-weight: 600; }

  .cell { flex: none; box-sizing: border-box; background: #fff; border-right: 1px solid #dcdcdc; border-bottom: 1.5px solid #dcdcdc; display: flex; align-items: center; justify-content: flex-start; white-space: nowrap; font-family: Lato, sans-serif; font-size: 27px; color: #1a1a1a; letter-spacing: 0.15px; position: relative; }
  .cell.right { justify-content: flex-end; font-size: 25.5px; letter-spacing: 0; }
  .cell.caps { font-size: 24.5px; letter-spacing: 0; }
  .cell.tight { font-size: 25px; letter-spacing: 0; }
  .cell .num2 { font-size: 25.5px; letter-spacing: 0; }
  .cell.nb { border-right-color: transparent; }
  .cell.clip { overflow: hidden; }
  .cell span { position: relative; z-index: 1; }
  .cell span:nth-child(2) { margin-left: auto; }
  .bold .cell { color: #000; -webkit-text-stroke: 0.45px #000; }
  .yellow .cell { background: #ffff2e; border-color: transparent; }
  .orange .cell { background: #fdb92a; border-color: transparent; }
  .cell.selected { outline: 1.5px solid #217346; outline-offset: -1.5px; z-index: 2; }
  .cell.total { border-top: 2px solid #111; border-bottom: 2px solid #111; }
  .cell.serif { font-family: "Liberation Serif", serif; font-size: 30px; -webkit-text-stroke: 0.3px #000; letter-spacing: 0; }
  .cell.bigger { font-size: 30px; }

  .scroll { width: 17px; flex: none; background: #e6e6e6; padding-top: 32px; border-right: 1px solid #b0b0b0; box-sizing: border-box; display: flex; flex-direction: column; }
  .sb-btn { height: 20px; margin: 0 1px; background: #fff; border: 1px solid #ccc; box-sizing: border-box; display: flex; align-items: center; justify-content: center; }
  .sb-thumb { height: 70px; margin: 1px 1px 0; background: #fff; border: 1px solid #c8c8c8; box-sizing: border-box; }

  .stub { width: 8px; flex: none; display: flex; flex-direction: column; background: #f4f4f4; overflow: hidden; font-size: 19px; line-height: 20px; }
  .s1 { height: 76px; flex: none; padding-top: 40px; box-sizing: border-box; background: linear-gradient(#1a1e28, #1c2430); color: #ddd; }
  .s2 { height: 54px; flex: none; background: #e6e6e6; }
  .s3 { height: 456px; flex: none; display: flex; flex-direction: column; color: #224; gap: 14px; padding-top: 76px; margin-left: -5px; box-sizing: border-box; }
  .s4 { height: 60px; flex: none; background: #2c2c2c; }
  .s5 { height: 74px; flex: none; background: #555; }
  .s6 { height: 130px; flex: none; background: #f4f4f4; }
  .s7 { height: 90px; flex: none; background: linear-gradient(115deg, #14143c 45%, #f0ece4 55%); }
  .s8 { display: flex; flex-direction: column; color: #222; line-height: 26px; padding-top: 76px; }
  .tl { color: #2f7f86; }
  .st { color: #e8862c; }

  .cursor { position: absolute; left: 1131px; top: 278px; }
</style>
